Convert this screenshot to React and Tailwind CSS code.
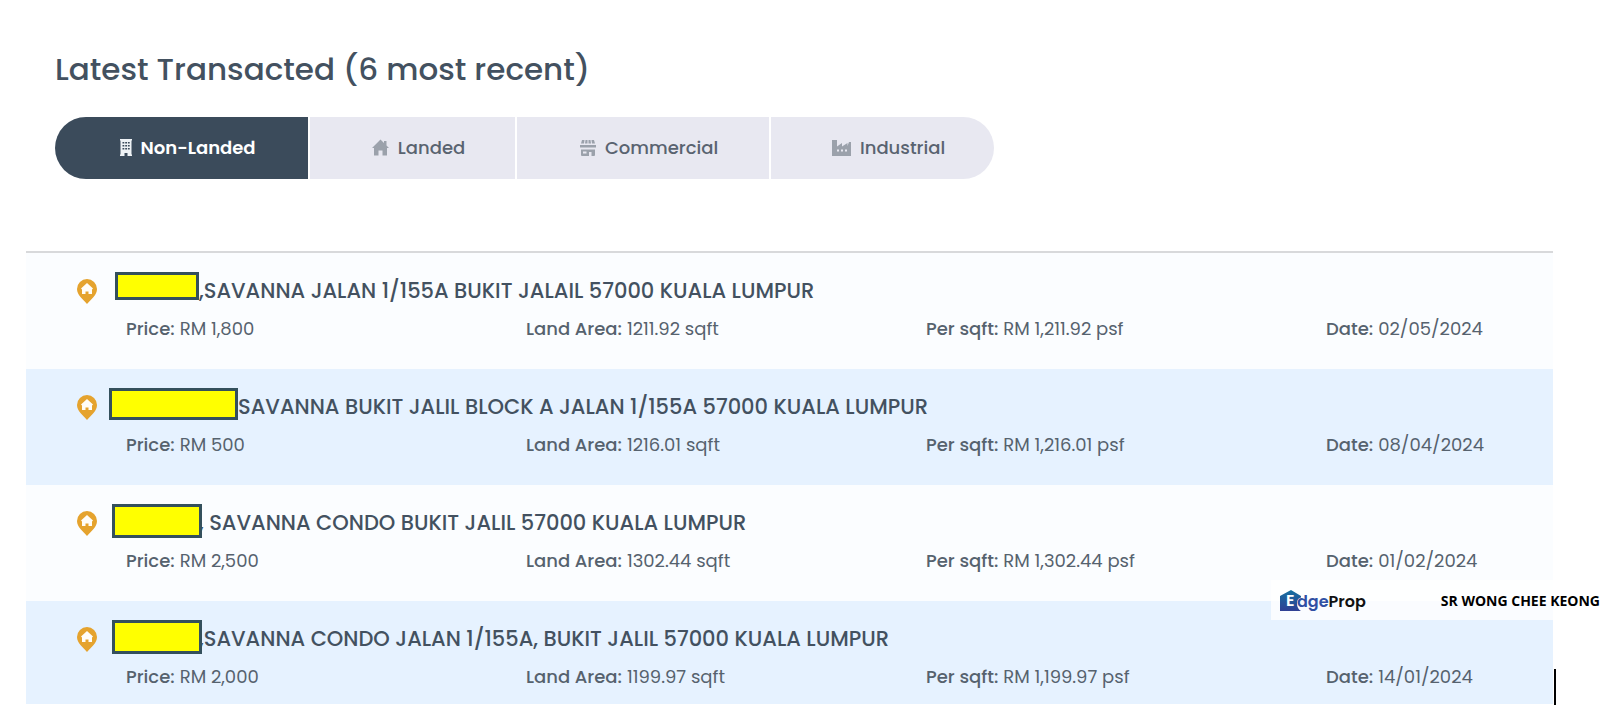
const BuildingIcon = () => (
  <svg viewBox="0 0 12 17" className="h-[17px] w-3 fill-current" aria-hidden="true">
    <path
      fillRule="evenodd"
      d="M0 0h12v1.500h-.5v14h.5V17H7.500v-3h-3v3H0v-1.500h.5v-14H0zM2.500 3v1.500h1.800V3zM5.200 3v1.500h1.800V3zM7.900 3v1.500h1.800V3zM2.500 6v1.500h1.800V6zM5.200 6v1.500h1.800V6zM7.900 6v1.500h1.800V6zM2.500 9v1.500h1.800V9zM5.200 9v1.500h1.800V9zM7.900 9v1.500h1.800V9z"
    />
  </svg>
);

const HouseIcon = () => (
  <svg viewBox="0 0 17 17" className="size-[17px] fill-current" aria-hidden="true">
    <path d="M8.500.5 12 4V2h2.500v4.500L17 9h-2v7.500h-4.500v-5h-4v5H2V9H0z" />
  </svg>
);

const StoreIcon = () => (
  <svg viewBox="0 0 16 17" className="h-[17px] w-4 fill-current" aria-hidden="true">
    <path
      fillRule="evenodd"
      d="M2 1h2.500L4 4.500H1zM5.500 1h2v3.500h-2.500zM8.500 1h2l.5 3.500H8.500zM11.500 1H14l1 3.500h-3zM0 6h16v2.500H0zM1 10.500h14V16a1 1 0 0 1-1 1h-2.500v-4H9v4H2a1 1 0 0 1-1-1zM3 12.500v2h3.500v-2z"
    />
  </svg>
);

const FactoryIcon = () => (
  <svg viewBox="0 0 19 17" className="h-[17px] w-[19px] fill-current" aria-hidden="true">
    <path fillRule="evenodd" d="M0 1h5v6.500L10 4v3.500L15.500 4v3L17 3h2v14H0zM5 10.500v2h2v-2zM9 10.500v2h2v-2zM13 10.500v2h2v-2z" />
  </svg>
);

const PinIcon = () => (
  <svg viewBox="0 0 20 25" className="h-[25px] w-5 shrink-0" aria-hidden="true">
    <path fill="#e5a32e" d="M10 0a10 10 0 0 1 10 10c0 6-6 10.500-10 15C6 20.500 0 16 0 10A10 10 0 0 1 10 0z" />
    <path fill="#fffdf8" d="m10 4 6 5.500-1 1v4.500h-3.500v-2.500h-3V15H5v-4.500l-1-1z" />
  </svg>
);

const tabs = [
  { label: "Non-Landed", Icon: BuildingIcon, active: true, size: "grow-[255] rounded-l-full" },
  { label: "Landed", Icon: HouseIcon, size: "grow-[204]" },
  { label: "Commercial", Icon: StoreIcon, size: "grow-[254]" },
  { label: "Industrial", Icon: FactoryIcon, size: "grow-[223] rounded-r-full" },
];

const transactions = [
  { mask: "ml-[18px] w-[84px] h-7", address: ",SAVANNA JALAN 1/155A BUKIT JALAIL 57000 KUALA LUMPUR", price: "RM 1,800", area: "1211.92 sqft", psf: "RM 1,211.92 psf", date: "02/05/2024" },
  { mask: "ml-3 w-[129px] h-8", address: "SAVANNA BUKIT JALIL BLOCK A JALAN 1/155A 57000 KUALA LUMPUR", price: "RM 500", area: "1216.01 sqft", psf: "RM 1,216.01 psf", date: "08/04/2024" },
  { mask: "ml-[15px] -mr-[3px] w-[90px] h-[34px]", address: ", SAVANNA CONDO BUKIT JALIL 57000 KUALA LUMPUR", price: "RM 2,500", area: "1302.44 sqft", psf: "RM 1,302.44 psf", date: "01/02/2024" },
  { mask: "ml-[15px] -mr-[3px] w-[90px] h-[34px]", address: ",SAVANNA CONDO JALAN 1/155A, BUKIT JALIL 57000 KUALA LUMPUR", price: "RM 2,000", area: "1199.97 sqft", psf: "RM 1,199.97 psf", date: "14/01/2024" },
];

const Detail = ({ label, value }) => (
  <div className="flex gap-[5px] whitespace-nowrap">
    <dt className="font-medium">{label}:</dt>
    <dd>{value}</dd>
  </div>
);

const Transaction = ({ item }) => (
  <li className="bg-[#fbfdff] pt-[19px] pb-7 pl-[51px] even:bg-[#e6f2ff] last:pb-[15px]">
    <div className="flex h-[38px] items-center">
      <PinIcon />
      <span className={`z-10 shrink-0 self-start border-[3px] border-[#34505c] bg-[#ffff00] ${item.mask}`} />
      <h2 className="text-[21px] font-medium whitespace-nowrap text-[#435160]">{item.address}</h2>
    </div>
    <dl className="mt-[7px] grid grid-cols-[400fr_400fr_400fr_227fr] pl-[49px] text-[18px] leading-6 text-[#56626e]">
      <Detail label="Price" value={item.price} />
      <Detail label="Land Area" value={item.area} />
      <Detail label="Per sqft" value={item.psf} />
      <Detail label="Date" value={item.date} />
    </dl>
  </li>
);

const EdgePropLogo = () => (
  <div className="relative flex items-center text-[16px] leading-5 font-semibold">
    <svg viewBox="0 0 22 21" className="h-[21px] w-[22px]" aria-hidden="true">
      <defs>
        <linearGradient id="edge-house" x1="0" y1="0" x2="0" y2="1">
          <stop offset="0" stopColor="#1670a0" />
          <stop offset="1" stopColor="#303f94" />
        </linearGradient>
      </defs>
      <path fill="url(#edge-house)" d="M0 6 11 0l10 6v1.500c-3 .5-4 3-4 6 0 3.500 1.500 6 4 7.500H0z" />
    </svg>
    <span className="absolute top-[2px] left-[6px] text-white">E</span>
    <span className="-ml-[5px] pt-[3px] text-[#3150a3]">dge</span>
    <span className="pt-[3px] text-[#111]">Prop</span>
  </div>
);

export default function App() {
  return (
    <div className="relative min-h-screen bg-white font-['Poppins','Inter',sans-serif]">
      <main className="pr-[58px] pl-[26px]">
        <header className="pt-12 pl-[29px]">
          <h1 className="text-[31px] leading-[42px] font-medium text-[#435160]">Latest Transacted (6 most recent)</h1>
          <div role="tablist" className="mt-[27px] flex h-[62px] max-w-[939px] gap-[2px]">
            {tabs.map(({ label, Icon, active, size }) => (
              <button
                key={label}
                type="button"
                role="tab"
                aria-selected={Boolean(active)}
                className={`flex basis-0 items-center justify-center gap-[9px] pb-[2px] pl-3 text-[18px] ${size} ${active ? "bg-[#3b4b5b] font-semibold text-white" : "bg-[#e8e8f1] font-medium text-[#596370]"}`}
              >
                <span className={active ? "text-[#eef2f5]" : "text-[#9ba1ab]"}>
                  <Icon />
                </span>
                {label}
              </button>
            ))}
          </div>
        </header>
        <ul className="mt-[72px] border-t-2 border-[#d8d9db]">
          {transactions.map((item) => (
            <Transaction key={item.address} item={item} />
          ))}
        </ul>
      </main>
      <aside className="absolute top-[580px] right-0 z-20 flex h-10 w-[340px] items-center justify-between bg-white/80 pr-[11px] pl-[9px]">
        <EdgePropLogo />
        <span className="font-['Open_Sans',sans-serif] text-[14px] font-bold text-black">SR WONG CHEE KEONG</span>
      </aside>
      <span className="absolute top-[669px] right-[55px] h-9 w-[2px] bg-black" />
    </div>
  );
}
